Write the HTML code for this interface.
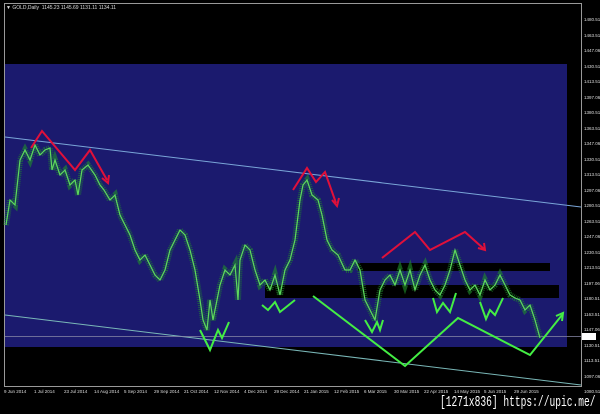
<!DOCTYPE html>
<html><head><style>
body{margin:0;background:#000;width:600px;height:414px;overflow:hidden;position:relative;font-family:"Liberation Sans",sans-serif}
.t{position:absolute;color:#ddd;font-size:5px;white-space:nowrap}
</style></head><body>
<svg width="600" height="414" style="position:absolute;left:0;top:0">
<rect x="4.5" y="3.5" width="577" height="383" fill="none" stroke="#999" stroke-width="1"/>
<rect x="5" y="64" width="562" height="283" fill="#1b1a6e"/>
<rect x="358" y="263" width="192" height="8" fill="#000"/>
<rect x="265" y="285" width="294" height="13" fill="#000"/>
<line x1="5" y1="137" x2="581" y2="207" stroke="#7aa6d8" stroke-width="1"/>
<line x1="5" y1="315" x2="581" y2="385" stroke="#7ab8b8" stroke-width="1"/>
<line x1="5" y1="336.5" x2="581" y2="336.5" stroke="#8a8aa8" stroke-width="0.8"/>
<polyline fill="none" stroke="#1f8f2a" stroke-width="6" stroke-opacity="0.6" stroke-dasharray="1 1" points="6,225 10,200 15,205 20,160 25,150 30,160 35,145 40,155 45,150 50,148 52,170 55,160 60,175 65,170 70,185 75,180 78,195 82,170 88,165 95,175 100,185 104,190 110,200 115,195 120,215 125,225 130,235 135,250 140,260 145,255 150,265 155,275 160,280 165,270 170,250 175,240 180,230 185,235 190,250 195,270 200,300 203,320 207,330 210,300 213,320 217,300 220,285 225,270 230,275 235,265 238,300 240,260 245,245 250,250 255,270 260,285 265,280 270,290 275,275 280,295 285,270 290,260 295,240 300,200 303,185 307,180 312,195 318,200 322,215 327,240 332,250 338,255 345,270 350,270 355,260 360,270 365,300 370,310 375,320 380,290 385,280 390,275 395,285 400,270 405,285 410,270 415,290 420,275 425,265 430,280 435,290 440,295 445,285 450,270 455,250 460,265 465,280 470,290 475,285 480,295 485,280 490,290 495,285 500,275 505,285 510,295 515,298 520,300 525,310 530,305 535,320 540,338"/>
<polyline fill="none" stroke="#5ed85e" stroke-width="1.2" points="6,225 10,200 15,205 20,160 25,150 30,160 35,145 40,155 45,150 50,148 52,170 55,160 60,175 65,170 70,185 75,180 78,195 82,170 88,165 95,175 100,185 104,190 110,200 115,195 120,215 125,225 130,235 135,250 140,260 145,255 150,265 155,275 160,280 165,270 170,250 175,240 180,230 185,235 190,250 195,270 200,300 203,320 207,330 210,300 213,320 217,300 220,285 225,270 230,275 235,265 238,300 240,260 245,245 250,250 255,270 260,285 265,280 270,290 275,275 280,295 285,270 290,260 295,240 300,200 303,185 307,180 312,195 318,200 322,215 327,240 332,250 338,255 345,270 350,270 355,260 360,270 365,300 370,310 375,320 380,290 385,280 390,275 395,285 400,270 405,285 410,270 415,290 420,275 425,265 430,280 435,290 440,295 445,285 450,270 455,250 460,265 465,280 470,290 475,285 480,295 485,280 490,290 495,285 500,275 505,285 510,295 515,298 520,300 525,310 530,305 535,320 540,338"/>
<g fill="none" stroke="#e0103a" stroke-width="2">
<polyline points="31,148 42,131 75,170 90,150 107,180"/><path d="M102,178 L108,183 L109,175"/>
<polyline points="293,190 307,168 316,182 325,172 336,203"/><path d="M332,200 L337,206 L339,198"/>
<polyline points="382,258 415,232 430,250 465,232 484,249"/><path d="M478,248 L485,250 L484,243"/>
</g>
<g fill="none" stroke="#44ee44" stroke-width="2">
<polyline points="200,330 210,350 218,330 222,338 229,322"/>
<polyline points="262,305 268,310 275,302 280,312 295,300"/>
<polyline points="313,296 405,366 458,318 530,355 562,315"/><path d="M556,316 L563,313 L562,321"/>
<polyline points="365,320 372,332 377,322 380,330 383,320"/>
<polyline points="433,298 437,312 443,303 450,312 456,293"/>
<polyline points="480,302 486,319 490,310 495,315 503,298"/>
</g>
<rect x="582" y="333" width="14" height="7" fill="#fff"/>
</svg>
<div class="t" style="left:6px;top:5px">▼ GOLD,Daily&nbsp; 1145.23 1145.69 1131.11 1134.11</div>
<div class="t" style="left:584px;top:12px;line-height:15.5px;font-size:4.5px">1480.51<br>1463.51<br>1447.06<br>1430.51<br>1413.51<br>1397.06<br>1380.51<br>1363.51<br>1347.06<br>1330.51<br>1313.51<br>1297.06<br>1280.51<br>1263.51<br>1247.06<br>1230.51<br>1213.51<br>1197.06<br>1180.51<br>1163.51<br>1147.06<br>1130.51<br>1113.51<br>1097.06<br>1080.51</div>
<div class="t" style="left:4px;top:389px;font-size:4.5px;word-spacing:0">
<span style="position:absolute;left:0">9 Jun 2014</span><span style="position:absolute;left:30px">1 Jul 2014</span><span style="position:absolute;left:60px">23 Jul 2014</span><span style="position:absolute;left:90px">14 Aug 2014</span><span style="position:absolute;left:120px">5 Sep 2014</span><span style="position:absolute;left:150px">29 Sep 2014</span><span style="position:absolute;left:180px">21 Oct 2014</span><span style="position:absolute;left:210px">12 Nov 2014</span><span style="position:absolute;left:240px">4 Dec 2014</span><span style="position:absolute;left:270px">29 Dec 2014</span><span style="position:absolute;left:300px">21 Jan 2015</span><span style="position:absolute;left:330px">12 Feb 2015</span><span style="position:absolute;left:360px">6 Mar 2015</span><span style="position:absolute;left:390px">30 Mar 2015</span><span style="position:absolute;left:420px">22 Apr 2015</span><span style="position:absolute;left:450px">14 May 2015</span><span style="position:absolute;left:480px">5 Jun 2015</span><span style="position:absolute;left:510px">29 Jun 2015</span></div>
<div style="position:absolute;left:440px;top:394px;color:#fff;font-family:'Liberation Mono',monospace;font-size:15px;white-space:nowrap;transform:scaleX(0.64);transform-origin:0 0">[1271x836] https://upic.me/</div>
</body></html>
